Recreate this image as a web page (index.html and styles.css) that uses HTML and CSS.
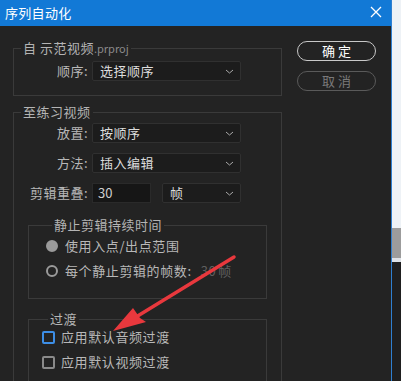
FILE: index.html
```html
<!DOCTYPE html>
<html>
<head>
<meta charset="UTF-8">
<link rel="stylesheet" href="styles.css">
</head>
<body>
<div class="screen">
	<div class="window">
		<div class="titlebar">
			<span class="caption">序列自动化</span>
			<svg class="close" width="12" height="12" viewBox="0 0 12 12"><path d="M1 1L11 11M11 1L1 11" stroke="#fff" stroke-width="1.3" fill="none"/></svg>
		</div>
		<div class="panel">
			<div class="main">
				<fieldset class="group">
					<legend>自 示范视频<span class="ext">.prproj</span></legend>
					<div class="row"><label>顺序:</label><div class="select">选择顺序<svg width="9" height="5" viewBox="0 0 9 5"><path d="M1 1L4.5 4L8 1" stroke="#aaa" fill="none"/></svg></div></div>
				</fieldset>

				<fieldset class="group practice">
					<legend>至练习视频</legend>
					<div class="rows">
						<div class="row"><label>放置:</label><div class="select">按顺序<svg width="9" height="5" viewBox="0 0 9 5"><path d="M1 1L4.5 4L8 1" stroke="#aaa" fill="none"/></svg></div></div>
						<div class="row"><label>方法:</label><div class="select">插入编辑<svg width="9" height="5" viewBox="0 0 9 5"><path d="M1 1L4.5 4L8 1" stroke="#aaa" fill="none"/></svg></div></div>
						<div class="row"><label>剪辑重叠:</label>
							<div class="pair">
								<div class="input">30</div>
								<div class="select unit">帧<svg width="9" height="5" viewBox="0 0 9 5"><path d="M1 1L4.5 4L8 1" stroke="#aaa" fill="none"/></svg></div>
							</div>
						</div>
					</div>

					<fieldset class="group inner still">
						<legend>静止剪辑持续时间</legend>
						<div class="choice"><span class="radio on"></span>使用入点/出点范围</div>
						<div class="choice"><span class="radio"></span>每个静止剪辑的帧数:<span class="dim num">30</span><span class="dim">帧</span></div>
					</fieldset>

					<fieldset class="group inner trans">
						<legend>过渡</legend>
						<div class="choice"><span class="check focus"></span>应用默认音频过渡</div>
						<div class="choice"><span class="check"></span>应用默认视频过渡</div>
					</fieldset>
				</fieldset>
			</div>

			<div class="buttons">
				<div class="btn ok">确定</div>
				<div class="btn cancel">取消</div>
			</div>
		</div>
	</div>
	<div class="outside"></div>

	<svg class="arrow" width="401" height="381" viewBox="0 0 401 381">
		<line x1="234" y1="257" x2="136" y2="317" stroke="#e8383d" stroke-width="3.5" stroke-linecap="round"/>
		<polygon points="113,331 133,308 140,318 146,322" fill="#e8383d"/>
	</svg>
</div>
</body>
</html>
```

FILE: styles.css
```css
body{
	margin:0;
	background:#232323;
	font-family:"Noto Sans CJK SC","Liberation Sans",sans-serif;
	font-size:13px;
	color:#b8b8b8;
	overflow:hidden;
}
.screen{
	position:relative;
	display:flex;
	width:401px;
	height:381px;
	overflow:hidden;
}
.window{
	width:391px;
	border-right:1px solid #2f7fd0;
	display:flex;
	flex-direction:column;
	background:#232323;
}
.outside{
	flex:1;
	background:linear-gradient(#eef2f6 0, #eef2f6 228px, #9c9c9c 228px, #9c9c9c 258px, #dfe3e8 258px, #dfe3e8 262px, #1f1f1f 262px);
}
.titlebar{
	height:26px;
	flex:none;
	background:#1279d6;
	display:flex;
	align-items:center;
	justify-content:space-between;
	padding:0 9px 0 5px;
	color:#fff;
	line-height:16px;
}
.caption{
	font-size:13px;
	letter-spacing:.3px;
}
.close{
	margin-top:-2px;
}
.panel{
	display:flex;
	gap:15px;
	padding:14px 0 0 13px;
	flex:1;
	min-height:0;
}
.main{
	width:269px;
	flex:none;
}
.group{
	margin:0;
	padding:5px 0 14px 0;
	border:1px solid #3a3a3a;
	min-width:0;
}
.group legend{
	margin-left:7px;
	padding:0 2px;
	line-height:16px;
	font-size:13px;
	color:#b4b4b4;
	letter-spacing:.5px;
}
.ext{
	font-size:11px;
	color:#8a8a8a;
	letter-spacing:0;
}
.practice{
	margin-top:8px;
	padding:3px 0 30px 0;
}
.rows{
	display:flex;
	flex-direction:column;
	gap:10px;
}
.row{
	display:grid;
	grid-template-columns:74px 149px;
	column-gap:4px;
	align-items:center;
	height:20px;
}
.row label{
	text-align:right;
	line-height:20px;
	letter-spacing:.5px;
}
.select{
	box-sizing:border-box;
	height:20px;
	display:flex;
	align-items:center;
	justify-content:space-between;
	background:#1c1c1c;
	border:1px solid #303030;
	border-radius:2px;
	padding:0 6px 0 7px;
	color:#dcdcdc;
	line-height:18px;
	letter-spacing:.5px;
}
.pair{
	display:flex;
	gap:11px;
}
.input{
	box-sizing:border-box;
	width:59px;
	height:20px;
	background:#161616;
	border:1px solid #2a2a2a;
	padding-left:5px;
	color:#cfcfcf;
	line-height:18px;
}
.unit{
	width:79px;
}
.inner{
	margin:14px 14px 0;
	padding:3px 0 17px 17px;
}
.inner legend{
	margin-left:6px;
}
.choice{
	display:flex;
	align-items:center;
	height:20px;
	line-height:20px;
	letter-spacing:.6px;
}
.choice + .choice{
	margin-top:5px;
}
.radio{
	box-sizing:border-box;
	width:12px;
	height:12px;
	border-radius:50%;
	border:2px solid #9a9a9a;
	margin-right:7px;
}
.radio.on{
	background:#9a9a9a;
}
.dim{
	color:#5f5f5f;
}
.num{
	margin-left:9px;
	margin-right:2px;
}
.trans{
	margin-top:12px;
	padding:0 0 30px 13px;
}
.check{
	box-sizing:border-box;
	width:13px;
	height:13px;
	border:2px solid #8a8a8a;
	border-radius:2px;
	margin-right:6px;
}
.check.focus{
	border-color:#3d8ee6;
}
.buttons{
	width:79px;
	display:flex;
	flex-direction:column;
	gap:10px;
	margin-top:1px;
}
.btn{
	box-sizing:border-box;
	height:20px;
	border-radius:10px;
	text-align:center;
	line-height:18px;
	letter-spacing:3px;
	text-indent:3px;
}
.ok{
	border:1px solid #c8c8c8;
	color:#fff;
}
.cancel{
	border:1px solid #5a5a5a;
	color:#7a7a7a;
}
.arrow{
	position:absolute;
	left:0;
	top:0;
	pointer-events:none;
}
```
